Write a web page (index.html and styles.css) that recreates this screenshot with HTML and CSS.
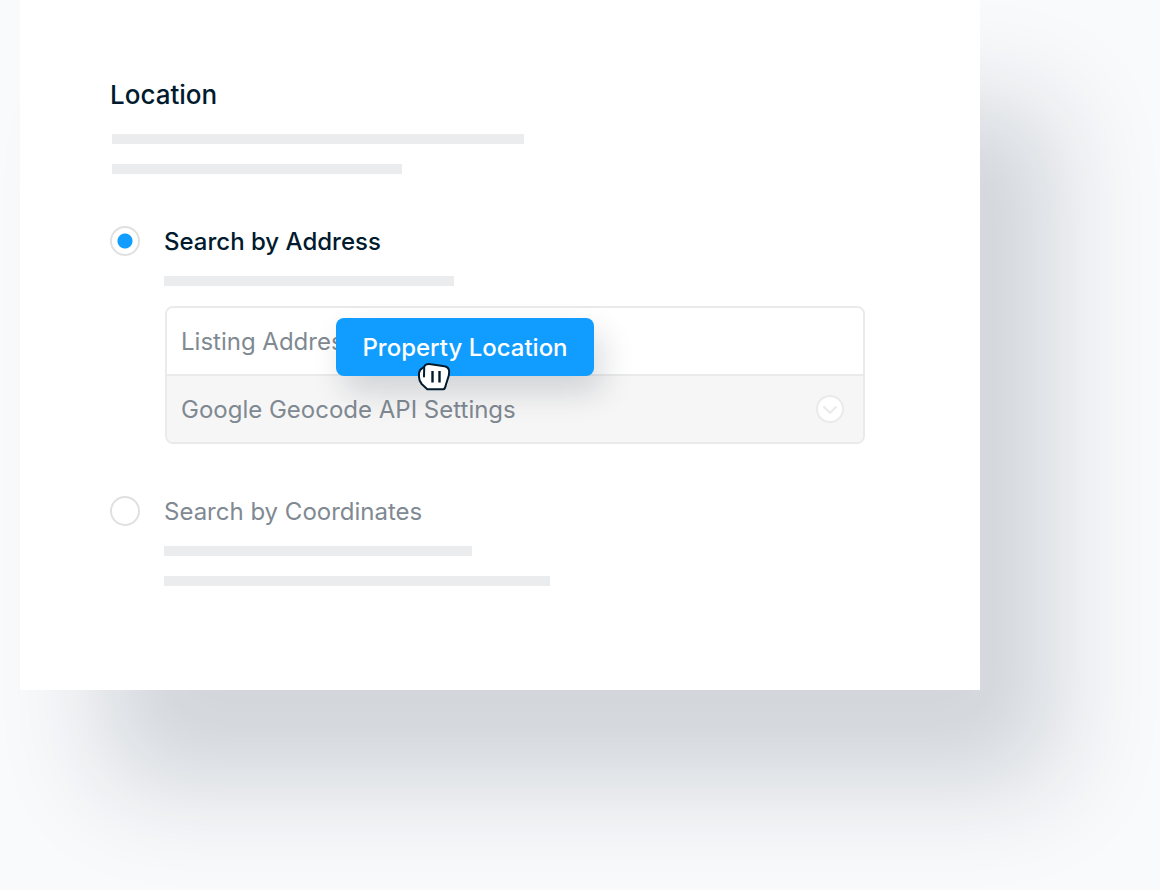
FILE: index.html
```html
<!DOCTYPE html>
<html lang="en">
<head>
    <meta charset="UTF-8">
    <title>Location</title>
    <link rel="stylesheet" href="styles.css">
</head>
<body>

<form class="card">
    <h1>Location</h1>
    <div class="lines intro">
        <div class="line line-412"></div>
        <div class="line line-290"></div>
    </div>

    <div class="option">
        <input type="radio" name="search" id="by-address" checked>
        <div class="option-body">
            <label for="by-address">Search by Address</label>
            <div class="line line-290"></div>
            <div class="fields">
                <input type="text" class="address" placeholder="Listing Address" aria-label="Listing Address">
                <button type="button" class="settings">
                    Google Geocode API Settings
                    <svg class="chevron" width="28" height="28" viewBox="0 0 28 28">
                        <circle cx="14" cy="14" r="13"/>
                        <path d="M7.5 11.5 L14 17.8 L20.5 11.5"/>
                    </svg>
                </button>

                <!-- field being dragged onto the address -->
                <button type="button" class="drag">Property Location</button>
                <svg class="hand" width="34" height="30" viewBox="0 0 34 30">
                    <path class="palm" d="M5.8 5.8 L7.4 4.4 Q7.9 2.5 10 2.2 Q12 1.7 14 2.3 L27.5 4.3 Q32 5.3 32.2 9.5 L31.8 13.5 L28.8 23 Q28.2 27.2 26.3 27.2 L10.3 27.2 L4.7 22 Q2 18.7 2 15 V11 Q2.6 7.3 5.8 5.8 Z"/>
                    <path d="M7.2 5.8 L7 14.5"/>
                    <path class="fingers" d="M15.5 9 V20.5 M22.5 9 V20.5"/>
                </svg>
            </div>
        </div>
    </div>

    <div class="option">
        <input type="radio" name="search" id="by-coordinates">
        <div class="option-body">
            <label for="by-coordinates">Search by Coordinates</label>
            <div class="lines">
                <div class="line line-308"></div>
                <div class="line line-386"></div>
            </div>
        </div>
    </div>
</form>

</body>
</html>
```
FILE: styles.css
```css
* {
    box-sizing: border-box;
}

body {
    margin: 0;
    min-height: 100vh;
    background-color: #f9fafc;
    color: #001a2e;
    font-family: Inter, Roboto, sans-serif;
    font-size: 24px;
    overflow-x: hidden;
}

.card {
    margin: 0 180px 0 20px;
    padding: 80px 115px 104px 90px;
    background-color: #fff;
    box-shadow: 80px 100px 100px -4px rgba(0, 26, 46, 0.16);
}

h1 {
    margin: 0 0 24px;
    font-size: 26px;
    font-weight: 500;
    line-height: 30px;
}

.lines {
    display: flex;
    flex-direction: column;
    gap: 20px;
}

.intro {
    margin-left: 2px;
}

.line {
    height: 10px;
    max-width: 100%;
    background-color: #ebecee;
}

.line-290 {
    width: 290px;
}

.line-308 {
    width: 308px;
}

.line-386 {
    width: 386px;
}

.line-412 {
    width: 412px;
}

.option {
    display: flex;
    align-items: flex-start;
    gap: 24px;
    margin-top: 52px;
}

.option input[type="radio"] {
    appearance: none;
    flex: none;
    width: 30px;
    height: 30px;
    margin: 0;
    border: 2px solid #dfe0e0;
    border-radius: 50%;
    background-color: #fff;
}

.option input[type="radio"]:checked {
    background-image: radial-gradient(circle, #119dff 6px, #119dff 7px, transparent 8px);
}

.option-body {
    flex: 1;
}

label {
    display: block;
    margin-bottom: 18px;
    line-height: 32px;
    color: #7f8992;
}

input:checked + .option-body label {
    color: #001a2e;
    font-weight: 500;
}

.fields {
    position: relative;
    margin: 20px 0 0 1px;
    border: 2px solid #e9eaea;
    border-radius: 8px;
}

.address,
.settings {
    display: flex;
    align-items: center;
    width: 100%;
    height: 66px;
    margin: 0;
    padding: 0 19px 0 14px;
    border: 0;
    background-color: #fff;
    color: #7f8992;
    font: inherit;
}

.address {
    border-radius: 6px 6px 0 0;
}

.address::placeholder {
    color: #7f8992;
    opacity: 1;
}

.settings {
    justify-content: space-between;
    height: 68px;
    border-top: 2px solid #e9eaea;
    border-radius: 0 0 6px 6px;
    background-color: #f6f6f6;
}

.chevron {
    fill: #fff;
    stroke: #e9eaea;
    stroke-width: 2;
}

.chevron path {
    fill: none;
}

.drag {
    position: absolute;
    top: 10px;
    left: 169px;
    height: 58px;
    width: 258px;
    padding: 0;
    border: 0;
    border-radius: 8px;
    background-color: #119dff;
    box-shadow: 8px 16px 32px rgba(0, 26, 46, 0.16);
    color: #fff;
    font: inherit;
    font-weight: 500;
    white-space: nowrap;
}

.hand {
    position: absolute;
    top: 54px;
    left: 250px;
    fill: none;
    stroke: #001a2e;
    stroke-width: 2;
    stroke-linecap: round;
    stroke-linejoin: round;
}

.hand .palm {
    fill: #fff;
}

.hand .fingers {
    stroke-width: 2.4;
    stroke-linecap: butt;
}
```
